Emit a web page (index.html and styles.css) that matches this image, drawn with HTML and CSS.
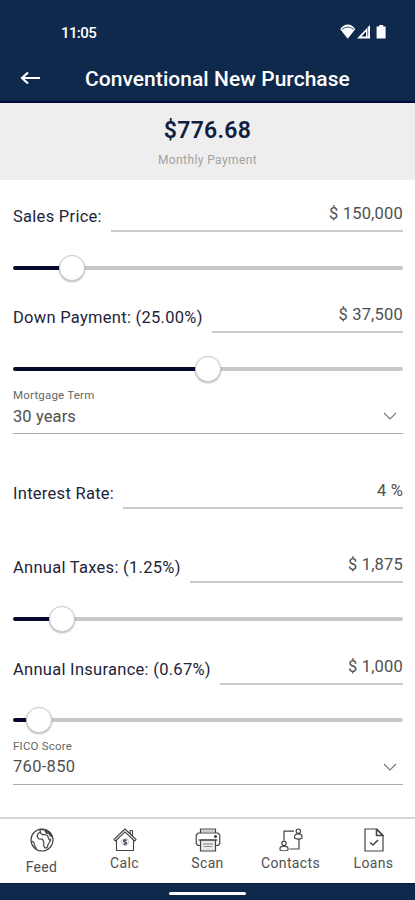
FILE: index.html
```html
<!DOCTYPE html>
<html lang="en">
<head>
<meta charset="utf-8">
<title>Conventional New Purchase</title>
<link rel="stylesheet" href="styles.css">
</head>
<body>
<header class="header">
  <div class="status">
    <span class="time">11:05</span>
    <svg class="status-icons" width="50" height="18" viewBox="0 0 50 18">
      <path d="M1.200 6.200C5-.1 12.600-.1 16.200 6.200L8.700 15.800z" fill="#fff"/>
      <path d="M2.800 6.300Q8.700 1.800 14.700 6.300" fill="none" stroke="#0f294d" stroke-width=".8"/>
      <path d="M31 2v13.500H18z" fill="#fff"/><path d="M27 8.500v5h-4.500z" fill="#0f294d"/><path d="M28.700 5v8.500" stroke="#0f294d" stroke-width=".6"/>
      <path d="M37.600 3.600h2.600V2h4v1.600h2.400v12h-9z" fill="#fff"/>
    </svg>
  </div>
  <div class="titlebar">
    <svg class="back" width="22" height="16" viewBox="0 0 22 16"><path d="M20 8H2M8 2.500L2 8l6 5.500" fill="none" stroke="#fff" stroke-width="2.200"/></svg>
    <h1 class="title">Conventional New Purchase</h1>
  </div>
</header>
<section class="summary">
  <div class="amount">$776.68</div>
  <div class="caption">Monthly Payment</div>
</section>
<main class="form">
  <div class="field"><label class="label">Sales Price:</label><div class="value">$ 150,000</div></div>
  <div class="slider"><div class="fill" style="width:15%"></div><div class="knob"></div><div class="rest"></div></div>
  <div class="field"><label class="label">Down Payment: (25.00%)</label><div class="value">$ 37,500</div></div>
  <div class="slider"><div class="fill" style="width:50%"></div><div class="knob"></div><div class="rest"></div></div>
  <div class="select">
    <div class="select-label">Mortgage Term</div>
    <div class="select-row"><span class="choice">30 years</span><svg class="chevron" width="14" height="8" viewBox="0 0 14 8"><path d="M1 1l6 6 6-6" fill="none" stroke="#777" stroke-width="1.100"/></svg></div>
  </div>
  <div class="field spaced"><label class="label">Interest Rate:</label><div class="value">4 %</div></div>
  <div class="field spaced"><label class="label">Annual Taxes: (1.25%)</label><div class="value">$ 1,875</div></div>
  <div class="slider"><div class="fill" style="width:12.500%"></div><div class="knob"></div><div class="rest"></div></div>
  <div class="field"><label class="label">Annual Insurance: (0.67%)</label><div class="value">$ 1,000</div></div>
  <div class="slider last"><div class="fill" style="width:6.700%"></div><div class="knob"></div><div class="rest"></div></div>
  <div class="select">
    <div class="select-label">FICO Score</div>
    <div class="select-row"><span class="choice choice-fico">760-850</span><svg class="chevron" width="14" height="8" viewBox="0 0 14 8"><path d="M1 1l6 6 6-6" fill="none" stroke="#777" stroke-width="1.100"/></svg></div>
  </div>
</main>
<nav class="tabs">
  <div class="tab feed">
    <svg width="24" height="24" viewBox="0 0 24 24" fill="none" stroke="#444" stroke-width="1.200" stroke-linejoin="round">
      <circle cx="12" cy="12" r="11"/>
      <path d="M9.500 1.500L10.500 4 8 5.500 7 8.500l1.800 2.300 3.700.4 1.200 2.800v4l1.500 2.200 2-1 1-3 2.300-3.700-1.500-1-1.500-4-2.500-1-2.500.3-2.500-2.300"/>
      <path d="M1.500 13l2.500 1.500.500 3 2 3M19.500 12.500l1.500-2"/>
      <path d="M10 1.500l5 .3 4 2.400 3 4.300M15 2.500l1.500 2.500 3 .5 1 3" stroke-width="1.600"/>
    </svg>
    <span>Feed</span>
  </div>
  <div class="tab">
    <svg width="24" height="24" viewBox="0 0 24 24" fill="none" stroke="#444" stroke-width="1.100" stroke-linejoin="round">
      <path d="M3.500 12.500v10h17v-10M1 11.500L12 1l11 10.500-1.500 1.500L12 3.800 2.500 13zM17.200 5.500V2.500h2.300v5"/>
      <circle cx="12" cy="14" r="3.500" stroke="#b5bac8" stroke-width=".7"/>
      <path d="M13.700 12.500c-1-1-3.300-.8-3.300.500 0 1.500 3.400.7 3.400 2.200 0 1.200-2.600 1.400-3.600.3M12 11v6.200" stroke="#424966" stroke-width="1.100"/>
    </svg>
    <span>Calc</span>
  </div>
  <div class="tab">
    <svg width="26" height="24" viewBox="0 0 26 24" fill="none" stroke="#444" stroke-width="1.200" stroke-linejoin="round">
      <path d="M5.500 5V1h15v4M5.500 17.500H3L1.200 15.500V7L3.200 5h19.600l2 2v8.500L23 17.500h-2.500"/>
      <path d="M5.500 12h15v11h-15z" fill="#e8e8e8"/>
      <path d="M3.500 12h19"/><path d="M8 16h10M9 18.500h8" stroke="#888"/><circle cx="20.500" cy="8.500" r="1" fill="#444"/>
      <path d="M6 3h14" stroke="#aaa"/>
    </svg>
    <span>Scan</span>
  </div>
  <div class="tab">
    <svg width="24" height="24" viewBox="0 0 24 24" fill="none" stroke="#444" stroke-width="1.200" stroke-linejoin="round">
      <path d="M5 12.500V3.200h10M20 11v10h-9.500"/>
      <circle cx="19.300" cy="3.200" r="2.200"/><path d="M15.500 10V8.500c0-3.500 7.500-3.500 7.500 0V10c-2 1.200-5.500 1.200-7.500 0z"/>
      <circle cx="5" cy="15.300" r="2.200"/><path d="M1 22v-1.500c0-3.200 8-3.200 8 0V22c-2 1-6 1-8 0z"/>
    </svg>
    <span>Contacts</span>
  </div>
  <div class="tab">
    <svg width="24" height="24" viewBox="0 0 24 24" fill="none" stroke="#444" stroke-width="1.200" stroke-linejoin="round">
      <path d="M14.500 1H3v22h18V7.500z"/><path d="M14.500 1v6.500H21L14.500 1" stroke-width="1.600"/><path d="M8 14.500l3 2.500 5-5" stroke-width="1.500"/>
    </svg>
    <span>Loans</span>
  </div>
</nav>
<footer class="homebar"><div class="pill"></div></footer>
</body>
</html>
```
FILE: styles.css
```css
* { box-sizing: border-box; }
body {
  margin: 0;
  width: 415px;
  height: 900px;
  overflow: hidden;
  display: flex;
  flex-direction: column;
  background: #fff;
  font-family: Roboto, "Liberation Sans", sans-serif;
  white-space: nowrap;
}
.header {
  height: 103px;
  flex: none;
  background: #0f294d;
  border-bottom: 2px solid #020c3c;
  color: #fff;
  padding-top: 22px;
}
.status {
  display: flex;
  justify-content: space-between;
  align-items: center;
  height: 20px;
  padding: 0 26px 0 61px;
}
.time { font-size: 15px; font-weight: 500; letter-spacing: -0.6px; margin-top: 2px; }
.titlebar {
  display: flex;
  align-items: center;
  height: 30px;
  margin-top: 21px;
  padding: 0 20px;
}
.title {
  margin: 2px 0 0 43px;
  font-size: 21px;
  font-weight: 500;
  line-height: 30px;
  letter-spacing: 0.05px;
}
.summary {
  height: 77px;
  flex: none;
  background: #eee;
  text-align: center;
  padding-top: 13px;
}
.amount {
  font-size: 23px;
  line-height: 30px;
  font-weight: 600;
  color: #101f42;
  letter-spacing: 0.3px;
}
.caption {
  margin-top: 7px;
  font-size: 12px;
  line-height: 14px;
  color: #a2a2a2;
  letter-spacing: 0.4px;
}
.form { padding: 22px 12px 0 13px; height: 637px; flex: none; }
.field { height: 30px; display: flex; gap: 9px; }
.spaced { margin-top: 44.500px; }
.label {
  font-size: 16.500px;
  line-height: 30px;
  color: #1d243b;
  letter-spacing: 0.28px;
}
.value {
  flex: 1;
  border-bottom: 2px solid #cacaca;
  text-align: right;
  font-size: 16.500px;
  line-height: 24px;
  color: #505050;
  letter-spacing: 0.2px;
}
.slider { height: 22px; margin: 25px 0 24.300px; display: flex; align-items: center; }
.slider:has(+ .select) { margin-bottom: 0; }
.slider.last { margin-top: 24px; }
.fill { height: 4px; background: #06082e; border-radius: 2px 0 0 2px; }
.rest { flex: 1; height: 4px; background: #c8c8c8; border-radius: 0 2px 2px 0; }
.knob {
  width: 26px;
  height: 26px;
  flex: none;
  margin: 0 -13px;
  border-radius: 50%;
  background: #fff;
  border: 1px solid #ccc;
  box-shadow: 0 1px 2px rgba(0, 0, 0, 0.3);
  z-index: 1;
}
.select { height: 54px; border-bottom: 1px solid #aaa; padding-top: 8px; }
.select-label { font-size: 11.500px; line-height: 14px; color: #666; letter-spacing: 0.2px; }
.select-row {
  display: flex;
  justify-content: space-between;
  align-items: center;
  height: 28px;
  padding-right: 6px;
}
.choice { font-size: 16.500px; color: #505050; letter-spacing: 0.1px; }
.choice-fico { letter-spacing: 0.3px; }
.tabs {
  height: 66px;
  flex: none;
  border-top: 2px solid #d6d6d6;
  display: grid;
  grid-template-columns: repeat(5, 83px);
}
.tab {
  display: flex;
  flex-direction: column;
  align-items: center;
  padding-top: 9px;
  font-size: 14px;
  line-height: 18px;
  color: #505050;
  letter-spacing: 0.35px;
}
.tab span { margin-top: 2px; }
.feed span { margin-top: 6px; }
.homebar {
  height: 17px;
  flex: none;
  background: #0f294d;
  border-top: 1px solid #07173d;
  display: flex;
  justify-content: center;
}
.pill { width: 77px; height: 3px; margin-top: 8px; border-radius: 2px; background: #fff; }
```
